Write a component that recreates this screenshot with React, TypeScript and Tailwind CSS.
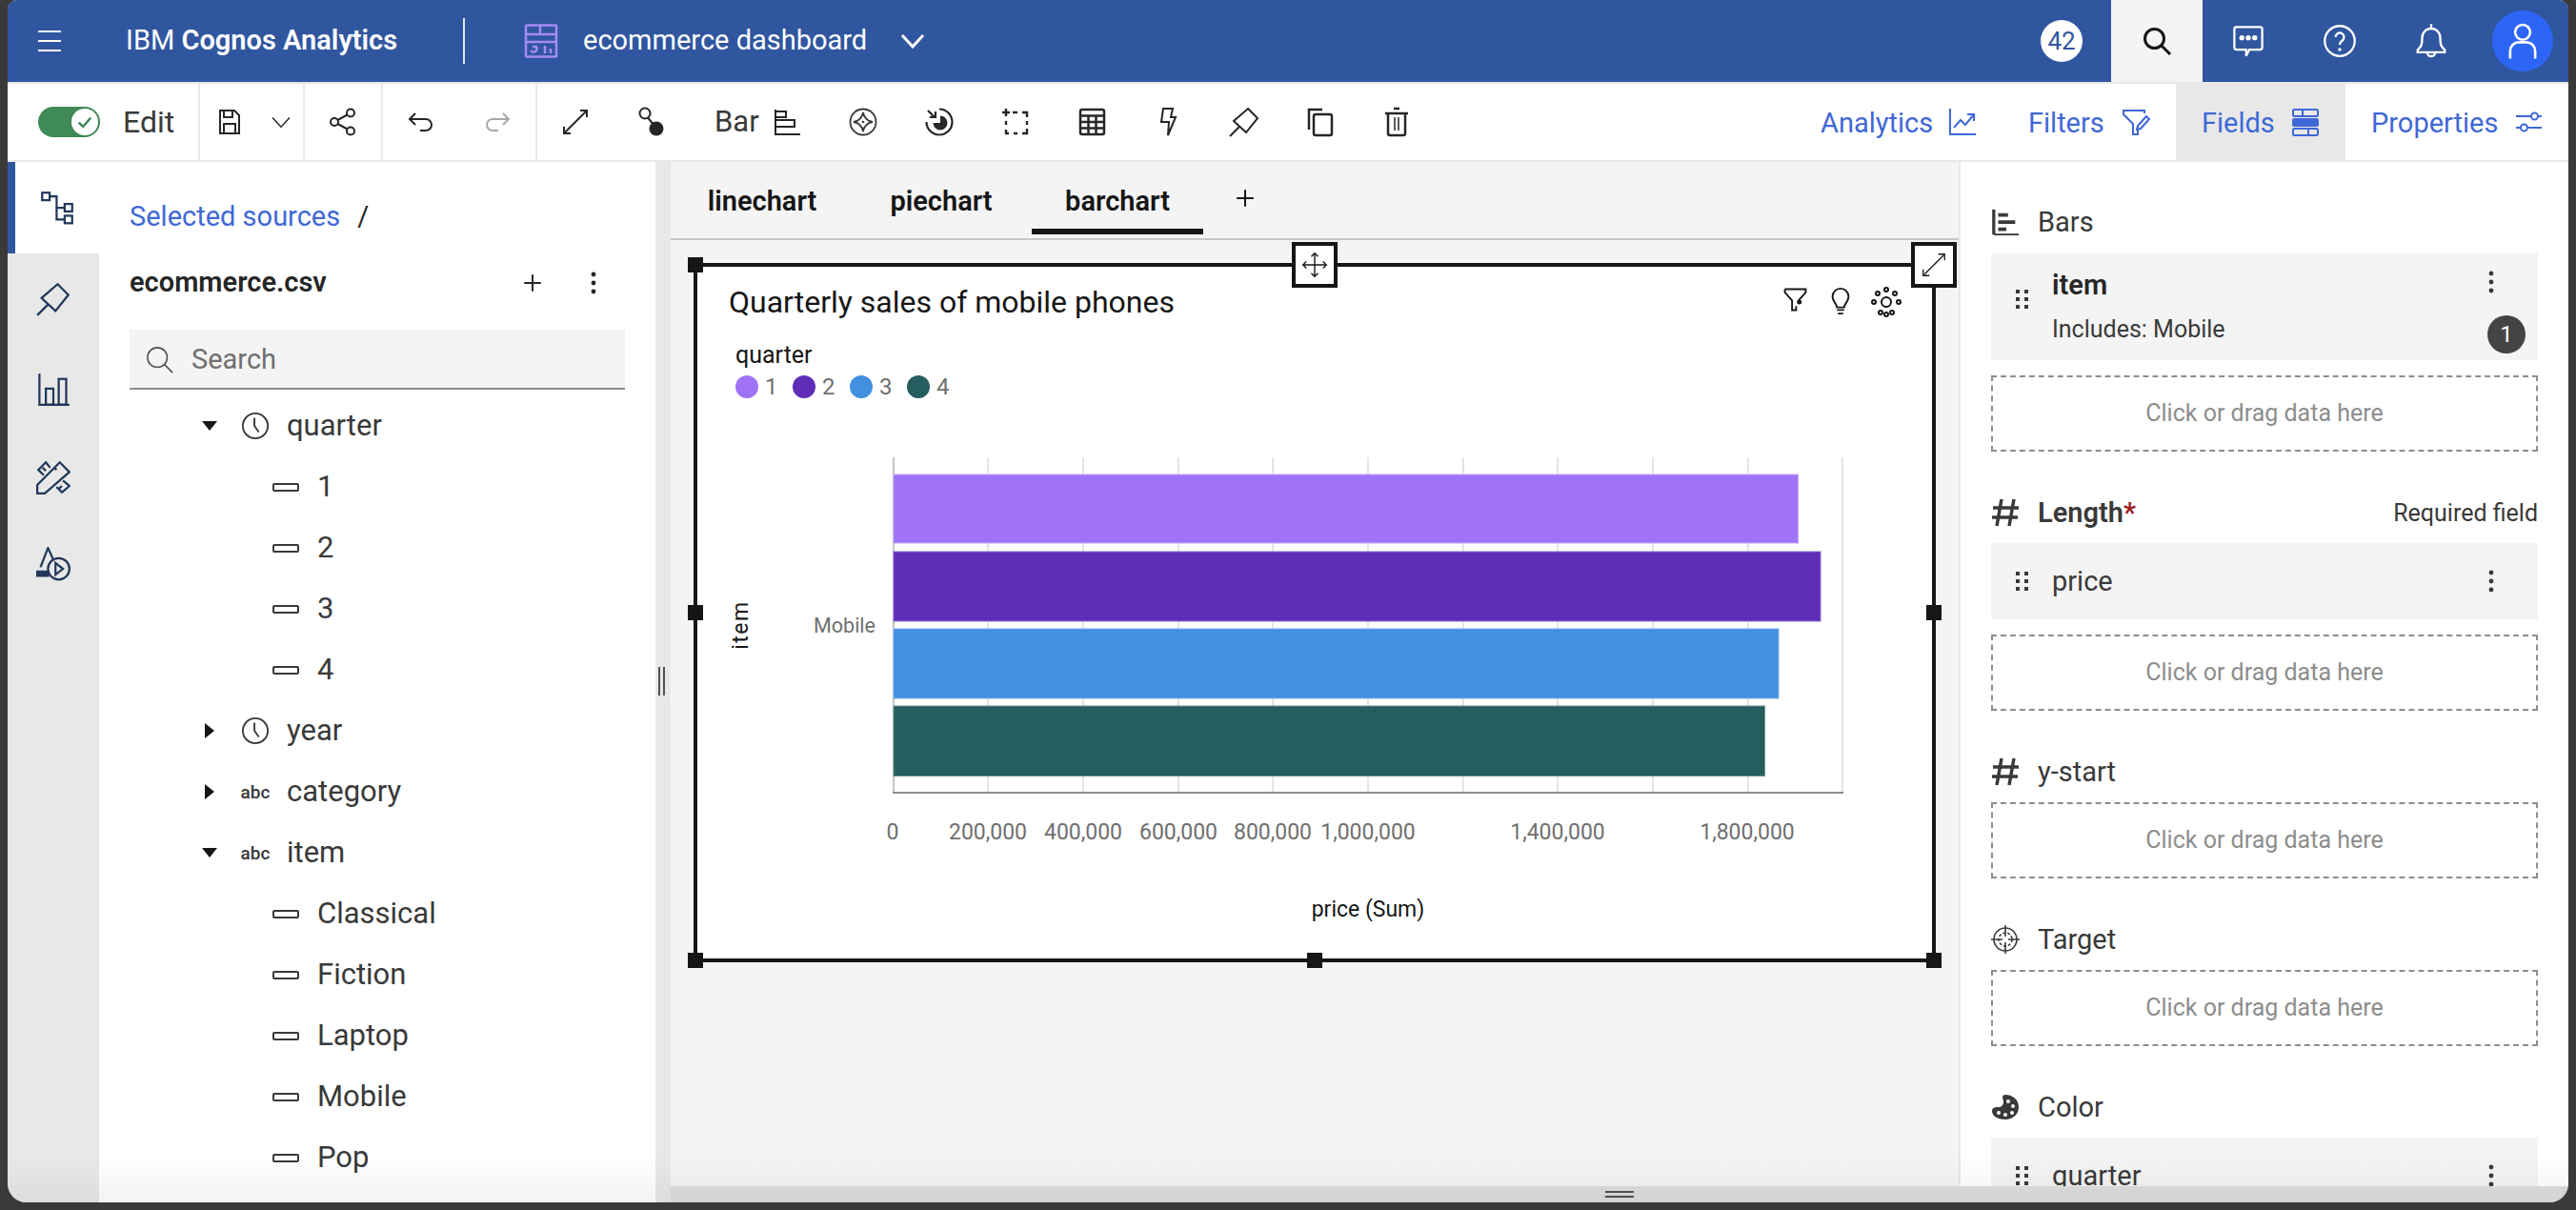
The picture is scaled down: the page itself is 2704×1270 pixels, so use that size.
import type { ReactNode } from 'react';

function Ico({ size = 32, sw = 2, className = '', children }: { size?: number; sw?: number; className?: string; children: ReactNode }) {
  return (
    <svg
      width={size}
      height={size}
      viewBox="0 0 32 32"
      fill="none"
      stroke="currentColor"
      strokeWidth={sw}
      className={`shrink-0 ${className}`}
    >
      {children}
    </svg>
  );
}

const PinShape = () => (
  <>
    <path d="M20 2 30 12 18 27 5 15Z" />
    <path d="M1 31 11 21" />
  </>
);

const ExpandShape = () => (
  <>
    <path d="M27 5 5 27" />
    <path d="M21 4h7v7" />
    <path d="M4 21v7h7" />
  </>
);

function Kebab() {
  return (
    <svg width="8" height="24" viewBox="0 0 8 24" fill="currentColor" className="shrink-0">
      <circle cx="4" cy="3" r="2.4" />
      <circle cx="4" cy="12" r="2.4" />
      <circle cx="4" cy="21" r="2.4" />
    </svg>
  );
}

function DragDots({ className = '' }: { className?: string }) {
  return (
    <div className={`grid w-[13px] shrink-0 grid-cols-2 gap-x-[5px] gap-y-[4px] ${className}`}>
      {[0, 1, 2, 3, 4, 5].map((d) => (
        <span key={d} className="h-[4px] w-[4px] bg-[#393939]" />
      ))}
    </div>
  );
}

function ToolCell({ children, className = '' }: { children: ReactNode; className?: string }) {
  return <div className={`flex h-full w-[80px] shrink-0 items-center justify-center ${className}`}>{children}</div>;
}

function Seg({ children, last = false }: { children: ReactNode; last?: boolean }) {
  return <div className={`flex h-full shrink-0 items-center ${last ? '' : 'border-r-2 border-[#e8e8e8]'}`}>{children}</div>;
}

function TopBar() {
  return (
    <header className="flex h-[86px] shrink-0 items-center bg-[#30569f] text-white">
      <div className="flex w-[88px] justify-center">
        <Ico size={32}>
          <path d="M4 6h24M4 16h24M4 26h24" />
        </Ico>
      </div>
      <div className="w-[36px]" />
      <div className="w-[354px] whitespace-nowrap text-[29px]">
        IBM <span className="font-semibold">Cognos Analytics</span>
      </div>
      <div className="h-[48px] w-[2px] bg-white/85" />
      <div className="ml-[62px] text-[#a58bf2]">
        <svg width="36" height="36" viewBox="0 0 36 36" fill="none" stroke="currentColor" strokeWidth="2.5">
          <rect x="2" y="1.5" width="32" height="33" rx="1" />
          <path d="M2 11h32M17 1.5V11M2 19h32" />
          <path d="M9 24h4a3.5 3.5 0 1 1-6 4" />
          <path d="M22 23v8M28 26v5" />
        </svg>
      </div>
      <div className="ml-[26px] w-[333px] whitespace-nowrap text-[29px]">ecommerce dashboard</div>
      <svg width="26" height="16" viewBox="0 0 26 16" fill="none" stroke="currentColor" strokeWidth="3">
        <path d="M2 2 13 14 24 2" />
      </svg>
      <div className="ml-auto flex h-full items-center">
        <div className="mr-[30px] flex h-[44px] w-[44px] items-center justify-center rounded-full bg-white text-[26px] text-[#30569f]">42</div>
        <div className="flex h-full w-[96px] items-center justify-center bg-[#f4f4f4] text-[#161616]">
          <Ico size={32} sw={3}>
            <circle cx="13.5" cy="13.5" r="10" />
            <path d="M21 21 30 30" />
          </Ico>
        </div>
        <div className="flex w-[96px] justify-center">
          <Ico size={36} sw={2}>
            <path d="M5 3h22a2 2 0 0 1 2 2v17a2 2 0 0 1-2 2H17l-3 6v-6H5a2 2 0 0 1-2-2V5a2 2 0 0 1 2-2Z" />
            <circle cx="10" cy="13" r="1.4" fill="currentColor" />
            <circle cx="16" cy="13" r="1.4" fill="currentColor" />
            <circle cx="22" cy="13" r="1.4" fill="currentColor" />
          </Ico>
        </div>
        <div className="flex w-[96px] justify-center">
          <Ico size={36} sw={2}>
            <circle cx="16" cy="16" r="14" />
            <path d="M12 12.5a4 4 0 1 1 6.2 3.3c-1.4 1-2.2 1.7-2.2 3.7" />
            <circle cx="16" cy="24" r="1.5" fill="currentColor" stroke="none" />
          </Ico>
        </div>
        <div className="flex w-[96px] justify-center">
          <Ico size={38} sw={2}>
            <path d="M16 1v3M8 13a8 8 0 0 1 16 0c0 7 1 8 4 11v2H4v-2c3-3 4-4 4-11Z" />
            <path d="M12.5 26a3.5 3.5 0 0 0 7 0" />
          </Ico>
        </div>
        <div className="mr-[16px] ml-[16px] flex h-[64px] w-[64px] items-center justify-center rounded-full bg-[#2d66f6]">
          <Ico size={42} sw={2}>
            <circle cx="16" cy="9" r="6" />
            <path d="M6 30v-6a7 7 0 0 1 7-7h6a7 7 0 0 1 7 7v6" />
          </Ico>
        </div>
      </div>
    </header>
  );
}

function SideTab({ label, width, active = false, children }: { label: string; width: string; active?: boolean; children: ReactNode }) {
  return (
    <div className={`flex h-full items-center gap-4 pr-[24px] pl-[27px] text-[#3f68d6] ${active ? 'bg-[#e8e8e8]' : ''}`}>
      <span className={`${width} whitespace-nowrap pt-[3px] text-[29px]`}>{label}</span>
      {children}
    </div>
  );
}

function Toolbar() {
  return (
    <div className="mt-[2px] flex h-[80px] shrink-0 items-center bg-white text-[#262626]">
      <Seg>
        <div className="flex w-[200px] items-center pl-[32px]">
          <div className="flex h-[32px] w-[65px] items-center justify-end rounded-full bg-[#3f8a56] pr-[2px]">
            <div className="flex h-[28px] w-[28px] items-center justify-center rounded-full bg-white text-[#3f8a56]">
              <Ico size={20} sw={4}>
                <path d="M6 17l7 7L26 9" />
              </Ico>
            </div>
          </div>
          <span className="ml-[24px] text-[32px] text-[#393939]">Edit</span>
        </div>
      </Seg>
      <Seg>
        <div className="flex w-[62px] justify-center">
          <Ico>
            <path d="M6 4h15l5 5v19H6Z" />
            <path d="M10 4v7h9V4M10 28V18h12v10" />
          </Ico>
        </div>
        <div className="flex w-[46px] justify-center">
          <Ico size={24}>
            <path d="M4 10 16 23 28 10" />
          </Ico>
        </div>
      </Seg>
      <Seg>
        <ToolCell>
          <Ico>
            <circle cx="7" cy="16" r="4" />
            <circle cx="24" cy="6.5" r="4" />
            <circle cx="24" cy="25.5" r="4" />
            <path d="M10.5 14 20.5 8.5M10.5 18 20.5 23.5" />
          </Ico>
        </ToolCell>
      </Seg>
      <Seg>
        <ToolCell>
          <Ico>
            <path d="M10 7 4 13l6 6" />
            <path d="M4 13h17a6 6 0 0 1 0 12h-6" />
          </Ico>
        </ToolCell>
        <ToolCell className="text-[#a8a8a8]">
          <Ico>
            <path d="M22 7l6 6-6 6" />
            <path d="M28 13H11a6 6 0 0 0 0 12h6" />
          </Ico>
        </ToolCell>
      </Seg>
      <Seg last>
        <ToolCell>
          <Ico>
            <ExpandShape />
          </Ico>
        </ToolCell>
        <ToolCell>
          <Ico>
            <circle cx="9" cy="7" r="5.5" />
            <path d="M12 11.5 19 20" />
            <circle cx="21" cy="23" r="7.5" fill="currentColor" stroke="none" />
          </Ico>
        </ToolCell>
        <div className="flex h-full w-[142px] items-center pl-[26px]">
          <span className="w-[50px] text-[31px] text-[#393939]">Bar</span>
          <Ico className="ml-[10px]" sw={2}>
            <path d="M4 3v26h26" />
            <path d="M4 5h11v6H4M4 14h20v7H4" />
          </Ico>
        </div>
        <ToolCell>
          <Ico sw={1.8} className="text-[#393939]">
            <circle cx="16" cy="16" r="13.5" />
            <path d="M16 6Q17.5 14.5 26 16 17.5 17.5 16 26 14.5 17.5 6 16 14.5 14.5 16 6Z" />
            <circle cx="16" cy="16" r="1.3" fill="currentColor" stroke="none" />
          </Ico>
        </ToolCell>
        <ToolCell>
          <Ico sw={2.2}>
            <path d="M16 2.5A13.5 13.5 0 1 1 2.5 16" />
            <path d="M4 4l7 7M12 5v6H6" />
            <path d="M17 9.5a7.5 7.5 0 1 1-7.5 7.5H17Z" fill="currentColor" stroke="none" />
          </Ico>
        </ToolCell>
        <ToolCell>
          <Ico sw={2.4}>
            <path d="M6 2v8M2 6h8" />
            <path d="M13 6h5M23 6h5v5M28 15v4M28 23v5h-5M18 28h-4M9 28H6v-4M6 19v-4" />
          </Ico>
        </ToolCell>
        <ToolCell>
          <Ico sw={2.5}>
            <rect x="4" y="3" width="25" height="26" rx="2" />
            <path d="M4 9.5h25M4 16h25M4 22.5h25M12.5 9.5V29M20.5 9.5V29" />
          </Ico>
        </ToolCell>
        <ToolCell>
          <Ico>
            <path d="M11 2h10l-2 9h5l-8 19 1-14H9Z" />
          </Ico>
        </ToolCell>
        <ToolCell>
          <Ico>
            <PinShape />
          </Ico>
        </ToolCell>
        <ToolCell>
          <Ico sw={2.5}>
            <rect x="9" y="8" width="19" height="22" rx="2" />
            <path d="M4 24V3h14" />
          </Ico>
        </ToolCell>
        <ToolCell>
          <Ico sw={2.5}>
            <path d="M13 2h6M4 7h24M7 7v21a2 2 0 0 0 2 2h14a2 2 0 0 0 2-2V7" />
            <path d="M14 11v14M18 11v14" strokeWidth="1.5" />
          </Ico>
        </ToolCell>
      </Seg>
      <div className="ml-auto flex h-full">
        <SideTab label="Analytics" width="w-[115px]">
          <Ico className="mx-[2px]">
            <path d="M3 2v27h27" />
            <path d="M7 22l7-8 5 5 9-11" />
            <path d="M21 8h7v7" />
          </Ico>
        </SideTab>
        <SideTab label="Filters" width="w-[79px]">
          <Ico className="mx-[2px]">
            <path d="M22 4H3v4l10 10v11h5V20" />
            <path d="M3 4h22v3" />
            <path d="M27 10l3 3-9 10-4 1 1-4Z" />
          </Ico>
        </SideTab>
        <SideTab label="Fields" width="w-[75px]" active>
          <Ico className="mx-[2px]">
            <rect x="3" y="3" width="26" height="7" rx="1.5" />
            <path d="M13 3v7M19 23v7" />
            <rect x="3" y="13" width="26" height="7" rx="1.5" fill="currentColor" />
            <rect x="3" y="23" width="26" height="7" rx="1.5" />
          </Ico>
        </SideTab>
        <SideTab label="Properties" width="w-[131px]">
          <Ico className="mx-[2px]">
            <path d="M3 10h16M26 10h4" />
            <circle cx="22.5" cy="10" r="3.5" />
            <path d="M3 22h5M15 22h15" />
            <circle cx="11.5" cy="22" r="3.5" />
          </Ico>
        </SideTab>
      </div>
    </div>
  );
}

const railIcons: { h: string; icon: ReactNode }[] = [
  {
    h: 'h-[96px]',
    icon: (
      <>
        <rect x="2" y="2" width="7" height="7" />
        <path d="M9 5.5h6.5V27H23M15.5 16H23" />
        <rect x="23" y="12.5" width="7" height="7" />
        <rect x="23" y="23.5" width="7" height="7" />
      </>
    ),
  },
  { h: 'h-[96px]', icon: <PinShape /> },
  {
    h: 'h-[94px]',
    icon: (
      <>
        <path d="M3 1v29h28" />
        <rect x="9" y="15" width="7" height="15" />
        <rect x="21" y="6" width="7" height="24" />
      </>
    ),
  },
  {
    h: 'h-[90px]',
    icon: (
      <>
        <path d="M22 2l9 9L8 31H1v-8Z" />
        <path d="M17 7 19 9" />
        <path d="M13 7 9 2 2 9l5 5" />
        <path d="M6 7l3 3" />
        <path d="M25 19l6 5-7 6-5-5" />
        <path d="M24 24l-3 3" />
      </>
    ),
  },
  {
    h: 'h-[92px]',
    icon: (
      <>
        <path d="M4 19 11 1l5 11" />
        <path d="M0 23h11v4H0Z" fill="currentColor" />
        <circle cx="21" cy="20.5" r="10" />
        <path d="M18 15l7 5.5-7 5.5Z" />
      </>
    ),
  },
];

function Rail() {
  return (
    <div className="h-full w-[96px] shrink-0 bg-[#e8e8e8] text-[#22375a]">
      {railIcons.map((r, i) => (
        <div
          key={i}
          className={`flex ${r.h} items-center justify-center ${i === 0 ? 'border-l-8 border-[#30569f] bg-white' : ''}`}
        >
          <Ico size={36} sw={2}>
            {r.icon}
          </Ico>
        </div>
      ))}
    </div>
  );
}

function Arrow({ open }: { open: boolean }) {
  return (
    <svg width="24" height="24" viewBox="0 0 24 24" fill="#161616" className="shrink-0">
      {open ? <path d="M4 7h16l-8 10Z" /> : <path d="M7 4l10 8-10 8Z" />}
    </svg>
  );
}

function ClockIcon() {
  return (
    <Ico size={30} sw={2}>
      <circle cx="16" cy="16" r="14" />
      <path d="M15 7v9l5 7" />
    </Ico>
  );
}

function AbcIcon() {
  return <span className="flex w-[30px] shrink-0 justify-center text-[19px] font-medium leading-none">abc</span>;
}

function Branch({ label, open, icon }: { label: string; open: boolean; icon: ReactNode }) {
  return (
    <div className="flex h-[64px] items-center pl-[72px]">
      <Arrow open={open} />
      <div className="ml-[21px] flex w-[30px] justify-center">{icon}</div>
      <span className="ml-[18px]">{label}</span>
    </div>
  );
}

function Leaf({ label }: { label: string }) {
  return (
    <div className="flex h-[64px] items-center pl-[150px]">
      <span className="h-[9px] w-[28px] shrink-0 rounded-[2px] border-2 border-[#393939]" />
      <span className="ml-[19px]">{label}</span>
    </div>
  );
}

function SourcePanel() {
  return (
    <aside className="h-full w-[584px] shrink-0 overflow-hidden bg-white px-[32px]">
      <div className="mt-[38px] flex h-[40px] items-center text-[29px]">
        <span className="text-[#3f68d6]">Selected sources</span>
        <span className="ml-[18px] text-[#262626]">/</span>
      </div>
      <div className="mt-[29px] flex h-[40px] items-center text-[29px] text-[#262626]">
        <span className="font-semibold">ecommerce.csv</span>
        <span className="ml-auto flex items-center">
          <Ico size={20} sw={3.2}>
            <path d="M16 2v28M2 16h28" />
          </Ico>
          <span className="mr-[29px] ml-[50px]">
            <Kebab />
          </span>
        </span>
      </div>
      <div className="mt-[29px] flex h-[63px] items-center border-b-2 border-[#8d8d8d] bg-[#f4f4f4] pt-[3px] pl-[17px] text-[29px] text-[#6f6f6f]">
        <Ico size={30} sw={1.7} className="text-[#525252]">
          <circle cx="13" cy="13" r="11" />
          <path d="M21 21 30 30" />
        </Ico>
        <span className="ml-[18px]">Search</span>
      </div>
      <div className="mt-[6px] text-[31px] text-[#393939]">
        <Branch label="quarter" open icon={<ClockIcon />} />
        <Leaf label="1" />
        <Leaf label="2" />
        <Leaf label="3" />
        <Leaf label="4" />
        <Branch label="year" open={false} icon={<ClockIcon />} />
        <Branch label="category" open={false} icon={<AbcIcon />} />
        <Branch label="item" open icon={<AbcIcon />} />
        <Leaf label="Classical" />
        <Leaf label="Fiction" />
        <Leaf label="Laptop" />
        <Leaf label="Mobile" />
        <Leaf label="Pop" />
      </div>
    </aside>
  );
}

function Tabs() {
  return (
    <div className="flex h-[82px] shrink-0 gap-[6px] border-b-2 border-[#c6c6c6] pb-[4px] pl-[3px] text-[29px] font-semibold text-[#161616]">
      <div className="flex w-[186px] items-center justify-center pt-[8px]">linechart</div>
      <div className="flex w-[178px] items-center justify-center pt-[8px]">piechart</div>
      <div className="flex w-[180px] items-center justify-center border-b-[6px] border-[#161616] pt-[14px]">barchart</div>
      <div className="flex w-[76px] items-center justify-center">
        <Ico size={20} sw={3.2}>
          <path d="M16 2v28M2 16h28" />
        </Ico>
      </div>
    </div>
  );
}

function Handle({ className }: { className: string }) {
  return <span className={`absolute h-[16px] w-[16px] bg-[#161616] ${className}`} />;
}

const bars = [
  { y: 498, h: 72, x: 1887.5, fill: '#a073f6', stroke: '#c4a8f8' },
  { y: 579, h: 73, x: 1911, fill: '#5f2db7', stroke: '#8f6fd0' },
  { y: 660, h: 73, x: 1867, fill: '#438fe0', stroke: '#7fb2ea' },
  { y: 741, h: 73.5, x: 1852.5, fill: '#265d5e', stroke: '#6b9192' },
];

const gridX = [1037, 1137, 1237, 1336, 1436, 1536, 1635, 1735, 1835, 1934];

const ticks = [
  { x: 937, t: '0' },
  { x: 1037, t: '200,000' },
  { x: 1137, t: '400,000' },
  { x: 1237, t: '600,000' },
  { x: 1336, t: '800,000' },
  { x: 1436, t: '1,000,000' },
  { x: 1635, t: '1,400,000' },
  { x: 1834, t: '1,800,000' },
];

function BarPlot() {
  return (
    <svg width="1296" height="584" viewBox="732 422 1296 584" fontFamily="Roboto, sans-serif" fontSize="23">
      {gridX.map((x) => (
        <line key={x} x1={x} x2={x} y1="480" y2="832" stroke="#e4e4e4" strokeWidth="2" />
      ))}
      <line x1="938" x2="938" y1="480" y2="832" stroke="#c6c6c6" strokeWidth="2" />
      {bars.map((b) => (
        <rect key={b.y} x="938" y={b.y} width={b.x - 938} height={b.h} fill={b.fill} stroke={b.stroke} strokeWidth="1" />
      ))}
      <line x1="937" x2="1935" y1="832" y2="832" stroke="#8d8d8d" strokeWidth="2" />
      {ticks.map((t) => (
        <text key={t.t} x={t.x} y="881" textAnchor="middle" fill="#6f6f6f">
          {t.t}
        </text>
      ))}
      <text x="919" y="664" textAnchor="end" fill="#6f6f6f" fontSize="21.5">
        Mobile
      </text>
      <text x="1436" y="962" textAnchor="middle" fill="#161616">
        price (Sum)
      </text>
      <text x="785" y="656" textAnchor="middle" fill="#161616" letterSpacing="1.5" transform="rotate(-90 785 656)">
        item
      </text>
    </svg>
  );
}

function Widget() {
  const legend = [
    { n: '1', c: 'bg-[#a073f6]' },
    { n: '2', c: 'bg-[#5f2db7]' },
    { n: '3', c: 'bg-[#438fe0]' },
    { n: '4', c: 'bg-[#265d5e]' },
  ];
  return (
    <div className="relative mt-[24px] ml-[24px] h-[734px] w-[1304px] border-4 border-[#161616] bg-white">
      <div className="mt-[15px] flex h-[44px] items-center pr-[24px] pl-[33px]">
        <span className="text-[32px] text-[#161616]">Quarterly sales of mobile phones</span>
        <div className="ml-auto flex text-[#161616]">
          <div className="flex w-[48px] justify-center">
            <Ico size={27} sw={2.2}>
              <path d="M3 3h26v4L20 17" />
              <path d="M3 3v4l9 10v12h5V24" />
              <circle cx="21" cy="19" r="3" fill="currentColor" stroke="none" />
            </Ico>
          </div>
          <div className="flex w-[48px] justify-center">
            <Ico size={30} sw={2}>
              <path d="M12 23c0-4-5-6-5-12a9 9 0 0 1 18 0c0 6-5 8-5 12Z" />
              <path d="M12 26h8M13 30h6" />
            </Ico>
          </div>
          <div className="flex w-[48px] justify-center">
            <Ico size={32} sw={2}>
              <circle cx="16" cy="16" r="5" />
              <circle cx="16" cy="3" r="2" />
              <circle cx="16" cy="29" r="2" />
              <circle cx="3" cy="16" r="2" />
              <circle cx="29" cy="16" r="2" />
              <circle cx="7" cy="7" r="2" />
              <circle cx="25" cy="7" r="2" />
              <circle cx="10" cy="27" r="2" />
              <circle cx="22" cy="27" r="2" />
            </Ico>
          </div>
        </div>
      </div>
      <div className="mt-[18px] flex h-[32px] items-center pl-[40px] text-[25px] text-[#161616]">quarter</div>
      <div className="mt-[1px] flex h-[32px] items-center pl-[40px] text-[24px] text-[#6f6f6f]">
        {legend.map((l) => (
          <div key={l.n} className="flex w-[60px] items-center">
            <span className={`h-[24px] w-[24px] rounded-full ${l.c}`} />
            <span className="ml-[7px]">{l.n}</span>
          </div>
        ))}
      </div>
      <BarPlot />

      <Handle className="top-[-10px] left-[-10px]" />
      <Handle className="top-[355px] left-[-10px]" />
      <Handle className="top-[355px] right-[-10px]" />
      <Handle className="bottom-[-10px] left-[-10px]" />
      <Handle className="right-[-10px] bottom-[-10px]" />
      <Handle className="bottom-[-10px] left-[640px]" />
      <div className="absolute top-[-26px] left-[624px] flex h-[48px] w-[48px] items-center justify-center border-4 border-[#161616] bg-white text-[#161616]">
        <Ico size={28} sw={1.6}>
          <path d="M16 2v28M2 16h28" />
          <path d="M12 6l4-4 4 4M12 26l4 4 4-4M6 12l-4 4 4 4M26 12l4 4-4 4" />
        </Ico>
      </div>
      <div className="absolute top-[-26px] right-[-26px] flex h-[48px] w-[48px] items-center justify-center border-4 border-[#161616] bg-white text-[#161616]">
        <Ico size={30} sw={1.4}>
          <ExpandShape />
        </Ico>
      </div>
    </div>
  );
}

function SectionLabel({ icon, children, right }: { icon: ReactNode; children: ReactNode; right?: string }) {
  return (
    <div className="flex h-[40px] items-center text-[29px] text-[#393939]">
      <div className="flex w-[30px] justify-center">{icon}</div>
      <div className="ml-[19px] pt-[2px]">{children}</div>
      {right && <span className="ml-auto pt-[2px] text-[25px] text-[#393939]">{right}</span>}
    </div>
  );
}

function DropZone() {
  return (
    <div className="mt-[16px] flex h-[80px] items-center justify-center border-2 border-dashed border-[#8d8d8d] text-[25px] text-[#8d8d8d]">
      Click or drag data here
    </div>
  );
}

function FieldRow({ label }: { label: string }) {
  return (
    <div className="mt-[12px] flex h-[80px] items-center bg-[#f4f4f4] pr-[45px] pl-[26px] text-[29px] text-[#393939]">
      <DragDots />
      <span className="ml-[25px] pt-[2px]">{label}</span>
      <span className="ml-auto">
        <Kebab />
      </span>
    </div>
  );
}

const HashIcon = () => (
  <Ico size={32} sw={3.5} className="text-[#393939]">
    <path d="M12 2 7 30M25 2 20 30M3 11h27M2 21h27" />
  </Ico>
);

function FieldsPanel() {
  return (
    <aside className="h-full flex-1 overflow-hidden bg-white pt-[43px] pr-[32px] pl-[32px]">
      <SectionLabel
        icon={
          <Ico size={30} sw={2} className="text-[#393939]">
            <path d="M3 2v28" strokeWidth="3.5" />
            <path d="M3 30h28" />
            <path d="M8 6h11v4H8ZM8 14h19v4H8ZM8 22h9v4H8Z" fill="currentColor" stroke="none" />
          </Ico>
        }
      >
        Bars
      </SectionLabel>
      <div className="relative mt-[13px] flex h-[112px] items-center bg-[#f4f4f4] pl-[26px] text-[#393939]">
        <DragDots className="-mt-[16px]" />
        <div className="ml-[25px] pb-[3px]">
          <div className="text-[29px] font-semibold leading-[40px] text-[#262626]">item</div>
          <div className="mt-[11px] text-[25px] leading-[32px]">Includes: Mobile</div>
        </div>
        <span className="absolute top-[18px] right-[45px]">
          <Kebab />
        </span>
        <span className="absolute top-[65px] right-[13px] flex h-[40px] w-[40px] items-center justify-center rounded-full bg-[#444444] text-[24px] text-white">
          1
        </span>
      </div>
      <DropZone />

      <div className="mt-[44px]">
        <SectionLabel icon={<HashIcon />} right="Required field">
          <span className="font-semibold">Length</span>
          <span className="font-semibold text-[#a2191f]">*</span>
        </SectionLabel>
        <FieldRow label="price" />
        <DropZone />
      </div>

      <div className="mt-[44px]">
        <SectionLabel icon={<HashIcon />}>y-start</SectionLabel>
        <div className="-mt-[4px]">
          <DropZone />
        </div>
      </div>

      <div className="mt-[44px]">
        <SectionLabel
          icon={
            <Ico size={32} sw={1.6} className="text-[#393939]">
              <circle cx="16" cy="16" r="12" />
              <circle cx="16" cy="16" r="7" strokeDasharray="3 2" />
              <path d="M16 1v12M16 19v12M1 16h12M19 16h12" />
            </Ico>
          }
        >
          Target
        </SectionLabel>
        <div className="-mt-[4px]">
          <DropZone />
        </div>
      </div>

      <div className="mt-[44px]">
        <SectionLabel
          icon={
            <svg width="30" height="28" viewBox="0 0 30 28" className="text-[#393939]">
              <path
                fill="currentColor"
                fillRule="evenodd"
                d="M15 1c8 0 14 5.5 14 13s-6 13-14 13C8 27 1 24 1 18c0-3 3-4 6-4 4 0 6-2 6-6 0-2-1-3-1-4 0-2 1-3 3-3ZM8 18a2 2 0 1 0 0 4 2 2 0 0 0 0-4Zm7 2a2 2 0 1 0 0 4 2 2 0 0 0 0-4Zm7-2a2 2 0 1 0 0 4 2 2 0 0 0 0-4Zm1-7a2 2 0 1 0 0 4 2 2 0 0 0 0-4Zm-5-5a2 2 0 1 0 0 4 2 2 0 0 0 0-4Z"
              />
            </svg>
          }
        >
          Color
        </SectionLabel>
        <FieldRow label="quarter" />
      </div>
    </aside>
  );
}

export default function App() {
  return (
    <div className="h-[1270px] w-[2704px] overflow-hidden bg-[#3a3a3a] px-[8px] pb-[8px] [font-family:Roboto,sans-serif]">
      <div className="relative flex h-full flex-col overflow-hidden rounded-t-[10px] rounded-b-[20px] bg-[#e8e8e8]">
        <TopBar />
        <Toolbar />
        <div className="mt-[2px] flex min-h-0 flex-1">
          <Rail />
          <SourcePanel />
          <div className="relative h-full w-[16px] shrink-0 bg-[#e8e8e8]">
            <div className="absolute top-[530px] left-[3px] h-[30px] w-[7px] border-x-2 border-[#525252]" />
          </div>
          <div className="flex min-w-0 flex-1 flex-col">
            <div className="flex min-h-0 flex-1">
              <main className="h-full w-[1352px] shrink-0 bg-[#f4f4f4]">
                <Tabs />
                <Widget />
              </main>
              <div className="w-[2px] bg-[#e8e8e8]" />
              <FieldsPanel />
            </div>
            <div className="flex h-[17px] shrink-0 items-center justify-center bg-[#dedede]">
              <div className="h-[7px] w-[30px] border-y-2 border-[#525252]" />
            </div>
          </div>
        </div>
        <div className="pointer-events-none absolute inset-x-0 bottom-0 h-[50px] bg-gradient-to-b from-transparent to-black/5" />
      </div>
    </div>
  );
}
